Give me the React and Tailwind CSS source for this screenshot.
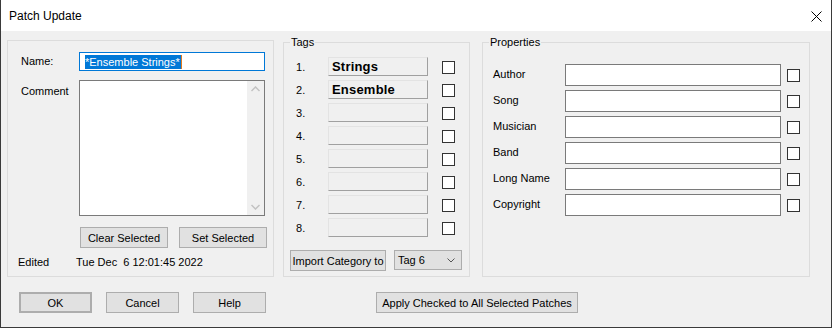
import React from "react";

const Check = ({ className = "" }) => (
  <div className={`w-[13px] h-[13px] border border-[#333333] bg-white shrink-0 ${className}`} />
);

const WinBtn = ({ children, className = "" }) => (
  <div
    className={`flex items-center justify-center whitespace-nowrap bg-[#e1e1e1] border border-[#adadad] text-[11px] ${className}`}
  >
    {children}
  </div>
);

const TagBtn = ({ label }) => (
  <div className="w-[100px] h-[19px] shrink-0 bg-[#f0f0f0] border border-t-[#e3e3e3] border-l-[#e3e3e3] border-r-[#a0a0a0] border-b-[#a0a0a0] flex items-center pl-[3px] text-[13px] font-bold leading-none tracking-[0.2px]">
    {label}
  </div>
);

export default function App() {
  const tags = ["Strings", "Ensemble", "", "", "", "", "", ""];
  const props = ["Author", "Song", "Musician", "Band", "Long Name", "Copyright"];
  return (
    <div className="w-[832px] h-[328px] flex flex-col bg-[#f0f0f0] border-x border-b border-[#3a3a3a] font-['Liberation_Sans',Arial,sans-serif] text-[11px] leading-[16px] text-black overflow-hidden">
      {/* Title bar */}
      <div className="h-[31px] shrink-0 bg-white flex items-center justify-between pl-[8px] pr-[9px]">
        <span className="text-[12px] leading-[16px] pt-[1px]">Patch Update</span>
        <svg width="11" height="11" viewBox="0 0 11 11" className="mt-[1px]">
          <path d="M0.5 0.5 L10.5 10.5 M10.5 0.5 L0.5 10.5" stroke="#000" strokeWidth="1" />
        </svg>
      </div>

      {/* Body */}
      <div className="flex-1 flex flex-col pl-[6px] pt-[3px]">
        <div className="flex items-start">
          {/* Left box */}
          <div className="mt-[6px] w-[267px] h-[237px] border border-[#dcdcdc] flex flex-col">
            <div className="mt-[11px] flex items-start">
              <span className="ml-[13px] w-[58px] mt-[1px]">Name:</span>
              <div className="w-[186px] h-[19px] border border-[#0078d7] bg-white flex items-center pl-[5px]">
                <span className="bg-[#0078d7] text-white leading-[14px] pr-[1px]">*Ensemble Strings*</span>
                <span className="w-[1px] h-[14px] bg-[#e07a1f]" />
              </div>
            </div>
            <div className="mt-[9px] flex items-start">
              <span className="ml-[13px] w-[58px] mt-[3px]">Comment</span>
              <div className="w-[186px] h-[136px] border border-[#7a7a7a] bg-white flex justify-end">
                <div className="w-[17px] h-full bg-[#f0f0f0] flex flex-col items-center justify-between py-[5px]">
                  <svg width="9" height="6" viewBox="0 0 9 6">
                    <path d="M0.5 5 L4.5 1 L8.5 5" stroke="#c2c2c2" strokeWidth="1.5" fill="none" />
                  </svg>
                  <svg width="9" height="6" viewBox="0 0 9 6">
                    <path d="M0.5 1 L4.5 5 L8.5 1" stroke="#c2c2c2" strokeWidth="1.5" fill="none" />
                  </svg>
                </div>
              </div>
            </div>
            <div className="mt-[11px] ml-[72px] flex">
              <WinBtn className="w-[88px] h-[21px]">Clear Selected</WinBtn>
              <WinBtn className="ml-[11px] w-[88px] h-[21px]">Set Selected</WinBtn>
            </div>
            <div className="mt-[6px] flex">
              <span className="ml-[10px] w-[58px]">Edited</span>
              <span className="whitespace-pre">Tue Dec  6 12:01:45 2022</span>
            </div>
          </div>

          {/* Tags */}
          <fieldset className="ml-[9px] w-[187px] h-[243px] border border-[#dcdcdc] pt-[7px]">
            <legend className="ml-[6px] px-[1px] leading-[16px]">Tags</legend>
            <div className="flex flex-col gap-[4px]">
              {tags.map((t, i) => (
                <div key={i} className="flex items-start h-[19px]">
                  <span className="ml-[12px] w-[32px] mt-[2px]">{i + 1}.</span>
                  <TagBtn label={t} />
                  <Check className="ml-[14px] mt-[4px]" />
                </div>
              ))}
            </div>
            <div className="mt-[13px] ml-[6px] flex items-start">
              <WinBtn className="w-[96px] h-[21px]">Import Category to</WinBtn>
              <div className="ml-[8px] w-[68px] h-[20px] bg-[#e1e1e1] border border-[#adadad] flex items-center justify-between pl-[3px] pr-[6px]">
                <span>Tag 6</span>
                <svg width="8" height="5" viewBox="0 0 8 5">
                  <path d="M0.5 0.5 L4 4 L7.5 0.5" stroke="#555" strokeWidth="1" fill="none" />
                </svg>
              </div>
            </div>
          </fieldset>

          {/* Properties */}
          <fieldset className="ml-[12px] w-[328px] h-[243px] border border-[#dcdcdc] pt-[14px]">
            <legend className="ml-[6px] px-[1px] leading-[16px]">Properties</legend>
            <div className="flex flex-col gap-[4px]">
              {props.map((p) => (
                <div key={p} className="flex items-start h-[22px]">
                  <span className="ml-[10px] w-[72px] mt-[2px]">{p}</span>
                  <div className="w-[216px] h-[22px] border border-[#7a7a7a] bg-white" />
                  <Check className="ml-[6px] mt-[5px]" />
                </div>
              ))}
            </div>
          </fieldset>
        </div>

        {/* Bottom buttons */}
        <div className="mt-[15px] ml-[12px] flex">
          <WinBtn className="w-[73px] h-[21px] border-2 border-[#0078d7]">OK</WinBtn>
          <WinBtn className="ml-[14px] w-[73px] h-[21px]">Cancel</WinBtn>
          <WinBtn className="ml-[14px] w-[73px] h-[21px]">Help</WinBtn>
          <WinBtn className="ml-[110px] w-[202px] h-[21px]">Apply Checked to All Selected Patches</WinBtn>
        </div>
      </div>
    </div>
  );
}
